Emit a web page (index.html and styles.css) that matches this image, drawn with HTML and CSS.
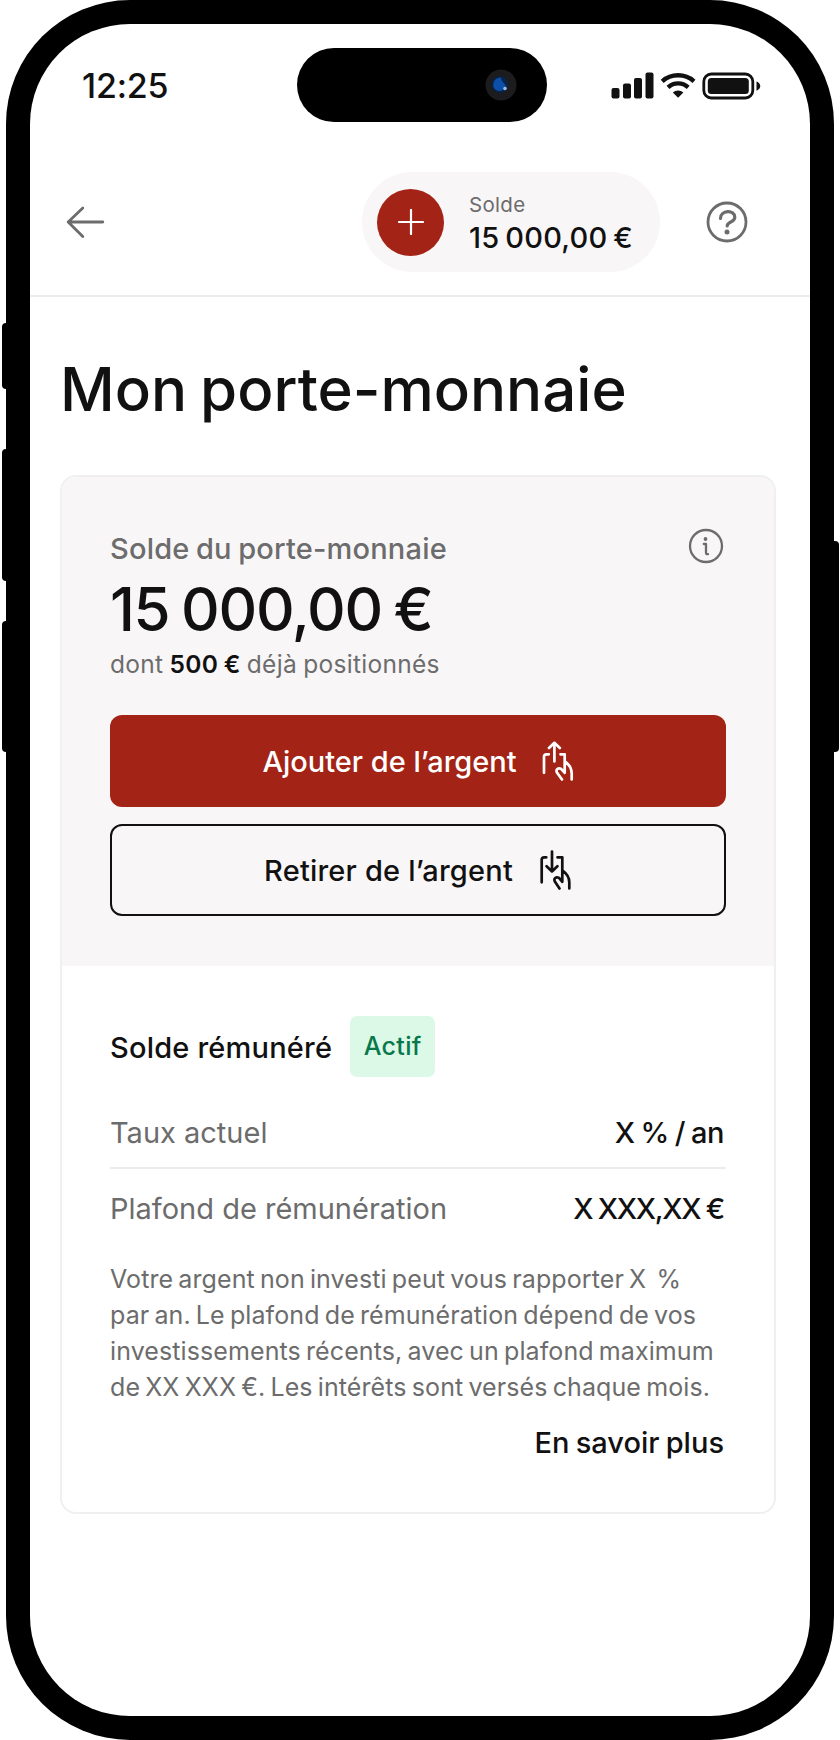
FILE: index.html
```html
<!DOCTYPE html>
<html lang="fr">
<head>
    <meta charset="UTF-8">
    <title>Mon porte-monnaie</title>
    <link rel="stylesheet" href="styles.css">
</head>
<body>
    <div class="phone">
        <span class="side side-mute"></span>
        <span class="side side-up"></span>
        <span class="side side-down"></span>
        <span class="side side-power"></span>

        <div class="screen">
            <div class="status">
                <span class="time">12:25</span>
                <div class="island">
                    <svg width="32" height="32" viewBox="0 0 32 32">
                        <circle cx="16" cy="16" r="15.500" fill="#1c1c1e"/>
                        <circle cx="15" cy="15.500" r="8.500" fill="#0a2245"/>
                        <path d="M8.500 18c-1-6 2.500-9.500 7.500-9.500 0 4 4.500 6 5 9.500-3 5-10 5.500-12.500 0z" fill="#0b4fa8"/>
                        <circle cx="20" cy="19.500" r="1.800" fill="#9dbbe0"/>
                    </svg>
                </div>
                <svg class="signals" width="150" height="28" viewBox="0 0 150 28" fill="#111">
                    <rect x="0.500" y="16" width="8" height="10.500" rx="2"/>
                    <rect x="12" y="11.500" width="8" height="15" rx="2"/>
                    <rect x="23" y="6" width="8" height="20.500" rx="2"/>
                    <rect x="34.500" y="0.500" width="8" height="26" rx="2"/>
                    <g fill="none" stroke="#111" stroke-width="4.400">
                        <path d="M51.200 9.300c9-8 22.800-8 31.800 0"/>
                        <path d="M57 15.300c6-5.200 14.200-5.200 20.200 0"/>
                    </g>
                    <path d="M61.800 20.500c3-2.700 7.600-2.700 10.600 0l-5.300 5.200z"/>
                    <rect x="92.800" y="2" width="49" height="24" rx="7.500" fill="none" stroke="#111" stroke-width="2.800"/>
                    <rect x="96.800" y="6" width="41" height="16" rx="3.500"/>
                    <path d="M145.500 9.500c5 1.600 5 7.600 0 9.200z"/>
                </svg>
            </div>

            <div class="header">
                <svg class="back" width="40" height="36" viewBox="0 0 40 36">
                    <path d="M37.800 18H3.200M17.800 4L3.200 18l14.600 14.500" fill="none" stroke="#6c6c6c" stroke-width="2.800" stroke-linecap="round" stroke-linejoin="round"/>
                </svg>
                <div class="pill">
                    <div class="plus">
                        <svg width="26" height="26" viewBox="0 0 26 26">
                            <path d="M13 1v24M1 13h24" stroke="#fff" stroke-width="2.200" stroke-linecap="round"/>
                        </svg>
                    </div>
                    <div class="pill-text">
                        <span class="pill-label">Solde</span>
                        <span class="pill-amount">15 000,00 €</span>
                    </div>
                </div>
                <svg class="help" width="42" height="42" viewBox="0 0 42 42" fill="none" stroke="#6c6c6c" stroke-width="2.800">
                    <circle cx="21" cy="21" r="19"/>
                    <path d="M14.500 17.500c0-8.700 14.300-9.200 14.300-1.300 0 5.500-7.600 4.100-7.600 8.800" stroke-width="3.200" stroke-linecap="round"/>
                    <circle cx="21" cy="31" r="2.500" fill="#6c6c6c" stroke="none"/>
                </svg>
            </div>

            <h1>Mon porte-monnaie</h1>

            <div class="card">
                <div class="balance">
                    <div class="balance-head">
                        <span class="label">Solde du porte-monnaie</span>
                        <svg class="info" width="36" height="36" viewBox="0 0 36 36" fill="none" stroke="#6c6c6c" stroke-width="2.300">
                            <circle cx="18" cy="18" r="16"/>
                            <path d="M15.800 16h2.200v8.800c0 1 .7 1.600 2 1.300" stroke-linecap="round" stroke-linejoin="round"/>
                            <circle cx="17.500" cy="11" r="1.900" fill="#6c6c6c" stroke="none"/>
                        </svg>
                    </div>
                    <p class="amount">15 000,00 €</p>
                    <p class="detail">dont <b>500 €</b> déjà positionnés</p>
                    <button class="btn btn-add">
                        <span>Ajouter de l’argent</span>
                        <svg width="32" height="40" viewBox="0 0 32 40">
                            <path d="M12.400 20.500V1.800M7 7l5.400-5.200L17.800 7M6.800 13.300H4.500Q2 13.300 2 15.800v16M18.500 13.300h4.200v18.500M20 38.500l-4.900-6.700c-1.800-3.200 1.200-5.600 4-3.900l3.600 3.900M22.700 20.300c4.800 3.400 7 7 7 12v6.200"/>
                        </svg>
                    </button>
                    <button class="btn btn-withdraw">
                        <span>Retirer de l’argent</span>
                        <svg width="32" height="40" viewBox="0 0 32 40">
                            <path d="M12 1.500v20M6.600 16.300l5.400 5.200 5.400-5.200M6.300 7.300H4.200Q1.700 7.300 1.700 9.800v22.500M17.500 7.300h4.800v24M19.500 38.500l-4.500-6.700c-1.800-3.200 1.200-5.600 4-3.900l3.300 3.900M22.300 20.300c4.800 3.400 7 7 7 12v6.200"/>
                        </svg>
                    </button>
                </div>

                <div class="interest">
                    <div class="interest-head">
                        <span class="interest-title">Solde rémunéré</span>
                        <span class="badge">Actif</span>
                    </div>
                    <div class="row">
                        <span>Taux actuel</span>
                        <span class="value value-rate">X % / an</span>
                    </div>
                    <div class="row row-last">
                        <span>Plafond de rémunération</span>
                        <span class="value value-cap">X XXX,XX €</span>
                    </div>
                    <p class="note">
                        Votre argent non investi peut vous rapporter X &nbsp;%<br>
                        par an. Le plafond de rémunération dépend de vos<br>
                        investissements récents, avec un plafond maximum<br>
                        de XX XXX €. Les intérêts sont versés chaque mois.
                    </p>
                    <a class="more">En savoir plus</a>
                </div>
            </div>
        </div>
    </div>
</body>
</html>
```
FILE: styles.css
```css
* {
    box-sizing: border-box;
}

body {
    margin: 0;
    background: #fff;
    color: #111;
    font-family: Inter, "Liberation Sans", sans-serif;
    font-weight: 500;
}

p, h1 {
    margin: 0;
    white-space: nowrap;
}

span, a {
    white-space: nowrap;
}

svg {
    display: block;
    flex: none;
}

/* phone */
.phone {
    position: relative;
    width: 828px;
    height: 1740px;
    margin: 0 6px;
    padding: 24px;
    background: #000;
    border-radius: 124px;
}

.side {
    position: absolute;
    left: -4.5px;
    width: 12px;
    background: #000;
    border-radius: 4px;
}

.side-mute {
    top: 323px;
    height: 66px;
}

.side-up {
    top: 449px;
    height: 132px;
}

.side-down {
    top: 621px;
    height: 131px;
}

.side-power {
    left: auto;
    right: -4.5px;
    top: 541px;
    height: 211px;
}

.screen {
    height: 1692px;
    background: #fff;
    border-radius: 100px;
    overflow: hidden;
}

/* status bar */
.status {
    display: grid;
    grid-template-columns: 1fr 250px 1fr;
    align-items: center;
    height: 98px;
    padding: 24px 49px 0 52px;
}

.time {
    padding-top: 1px;
    font-size: 34px;
    letter-spacing: -0.2px;
}

.island {
    display: flex;
    align-items: center;
    justify-content: flex-end;
    width: 250px;
    height: 74px;
    padding-right: 30px;
    background: #000;
    border-radius: 37px;
}

.signals {
    justify-self: end;
    margin-top: 2px;
}

/* header */
.header {
    display: flex;
    align-items: center;
    height: 175px;
    padding: 50px 62px 23px 35px;
    border-bottom: 2px solid #ececec;
}

.pill {
    display: flex;
    align-items: center;
    gap: 25px;
    width: 298px;
    height: 100px;
    margin-left: auto;
    margin-right: 46px;
    padding-left: 15px;
    background: #f9f6f8;
    border-radius: 50px;
}

.plus {
    display: flex;
    align-items: center;
    justify-content: center;
    width: 67px;
    height: 67px;
    background: #a32416;
    border-radius: 50%;
}

.pill-text {
    display: flex;
    flex-direction: column;
    padding-top: 2px;
}

.pill-label {
    font-size: 20.5px;
    font-weight: 400;
    line-height: 28px;
    color: #6c6c6c;
    letter-spacing: 0.3px;
}

.pill-amount {
    font-size: 29px;
    line-height: 37px;
    letter-spacing: 0.2px;
    word-spacing: -2px;
}

h1 {
    padding: 57px 0 0 30px;
    font-size: 60px;
    font-weight: 500;
    line-height: 70px;
    letter-spacing: 0;
    word-spacing: -3px;
}

/* card */
.card {
    width: 716px;
    margin: 51px 0 0 30px;
    border: 2px solid #f0f0f0;
    border-radius: 16px;
    overflow: hidden;
}

.balance {
    padding: 51px 48px 50px;
    background: #f9f6f8;
}

.balance-head {
    display: flex;
    align-items: center;
    justify-content: space-between;
    height: 40px;
    padding-right: 2px;
}

.info {
    margin-bottom: 4px;
}

.label {
    font-size: 29px;
    color: #6c6c6c;
    letter-spacing: 0.2px;
    word-spacing: -1.5px;
}

.amount {
    margin-top: 6px;
    font-size: 60px;
    line-height: 70px;
    letter-spacing: -1.3px;
    word-spacing: -3px;
}

.detail {
    margin: 4px 0 35px;
    font-size: 24.5px;
    font-weight: 400;
    line-height: 32px;
    color: #6c6c6c;
    letter-spacing: 0.3px;
    word-spacing: -1px;
}

.detail b {
    font-weight: 600;
    color: #111;
}

.btn {
    display: flex;
    align-items: center;
    justify-content: center;
    gap: 25px;
    width: 100%;
    height: 92px;
    border: none;
    border-radius: 12px;
    font: inherit;
    font-size: 29px;
}

.btn path {
    fill: none;
    stroke: currentColor;
    stroke-width: 2.7;
    stroke-linecap: round;
    stroke-linejoin: round;
}

.btn-add {
    background: #a32416;
    color: #fff;
}

.btn-withdraw {
    gap: 27px;
    margin-top: 17px;
    background: transparent;
    border: 2px solid #111;
    color: #111;
    letter-spacing: 0.2px;
}

.interest {
    padding: 50px 48px 49px;
}

.interest-head {
    display: flex;
    align-items: center;
    gap: 18px;
    height: 61px;
    margin-bottom: 21px;
}

.interest-title {
    padding-top: 2px;
    font-size: 29px;
    letter-spacing: 0.2px;
}

.badge {
    width: 85px;
    height: 61px;
    background: #dcf9e8;
    border-radius: 7px;
    color: #08784a;
    font-size: 25px;
    line-height: 61px;
    letter-spacing: 0.3px;
    text-align: center;
}

.row {
    display: flex;
    align-items: center;
    justify-content: space-between;
    height: 71px;
    padding-right: 2px;
    border-bottom: 2px solid #ececec;
    color: #6c6c6c;
    font-size: 29px;
    font-weight: 400;
}

.row-last {
    height: 79px;
    border: none;
}

.value {
    color: #111;
    font-weight: 500;
}

.value-rate {
    letter-spacing: -0.5px;
    word-spacing: -1.2px;
}

.value-cap {
    letter-spacing: -1.3px;
    word-spacing: -1px;
}

.note {
    margin: 13px 0 18px;
    color: #6c6c6c;
    font-size: 25px;
    font-weight: 400;
    line-height: 36px;
    letter-spacing: 0.1px;
    word-spacing: -2px;
}

.more {
    display: block;
    padding-right: 2px;
    font-size: 29px;
    line-height: 40px;
    word-spacing: -1.5px;
    text-align: right;
}
```
